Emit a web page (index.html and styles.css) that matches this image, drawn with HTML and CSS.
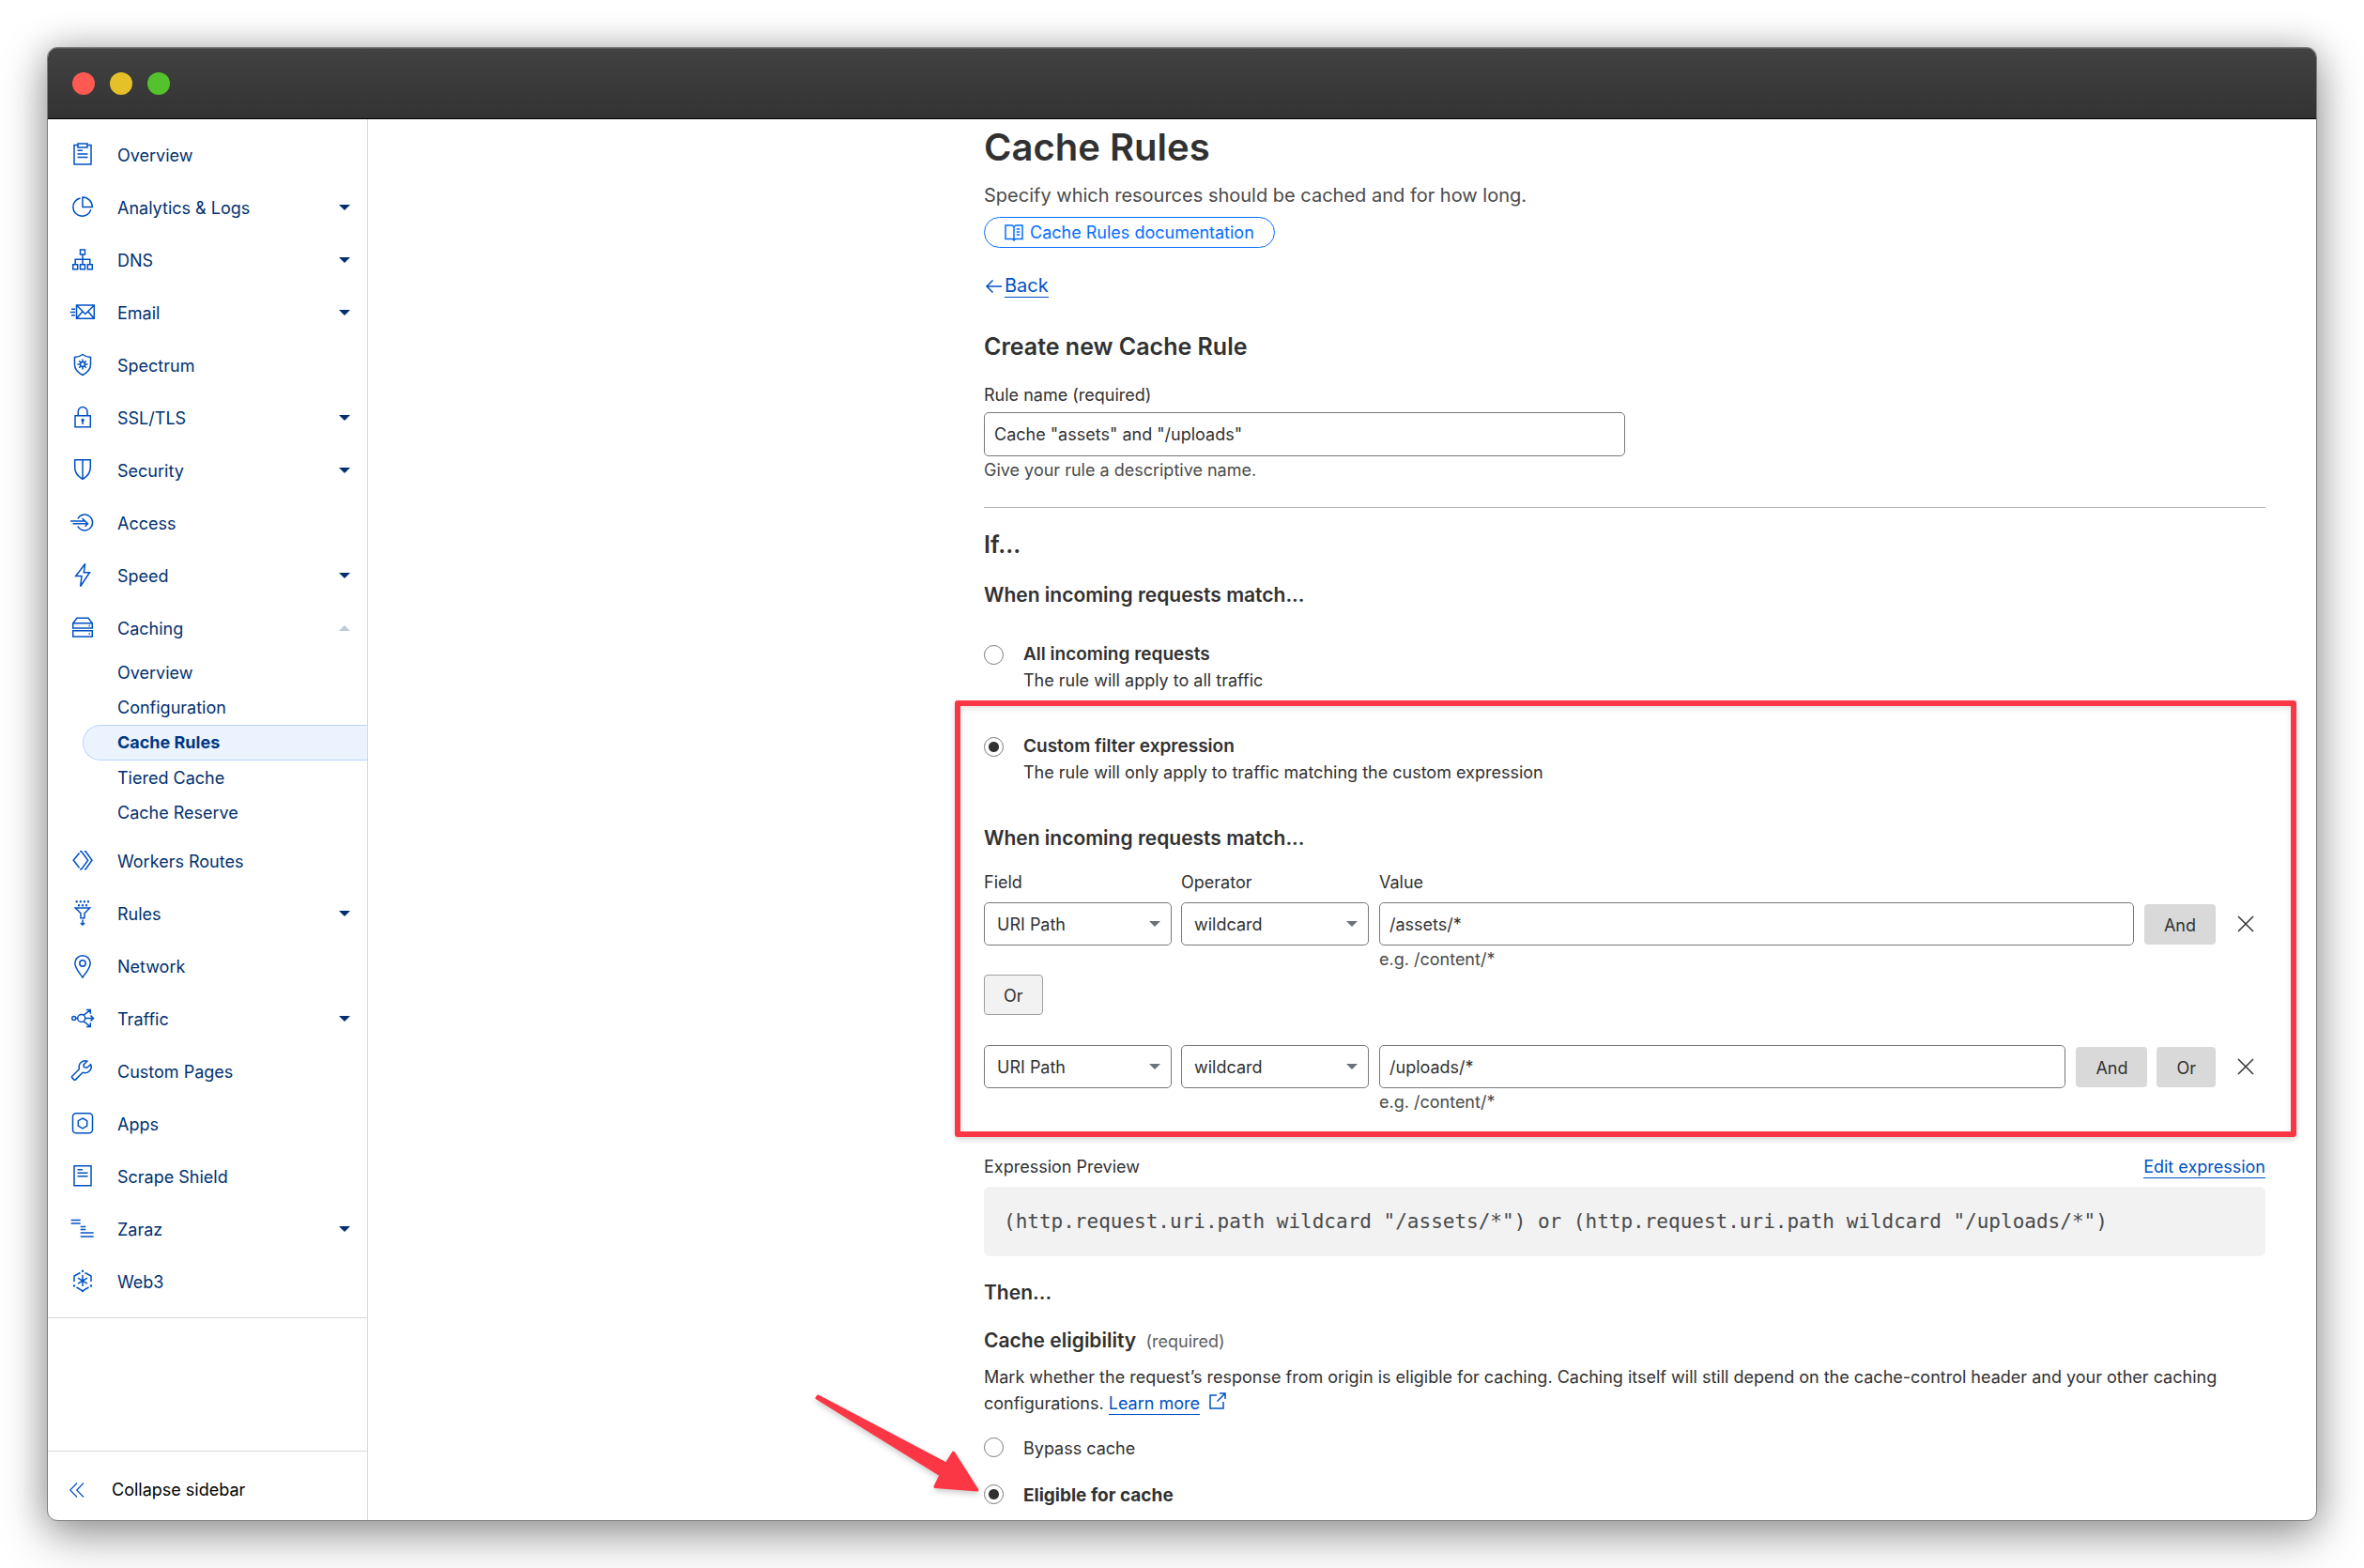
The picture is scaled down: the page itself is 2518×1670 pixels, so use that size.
FILE: index.html
```html
<!DOCTYPE html>
<html lang="en">
<head>
<meta charset="utf-8">
<meta name="viewport" content="width=device-width, initial-scale=1">
<title>Cache Rules</title>
<link rel="stylesheet" href="styles.css">
</head>
<body>
<div class="window">
  <header class="titlebar">
    <span class="light light-close"></span>
    <span class="light light-min"></span>
    <span class="light light-max"></span>
  </header>
  <div class="layout">
    <aside class="sidebar">
      <nav class="nav" aria-label="Zone">
        <a class="nav-item" href="#"><svg class="icon" viewBox="0 0 28 28"><path d="M9 3.500H5v20.500h18V3.500h-4M9 2h10v4H9zM8.500 9.300H14M8.500 13h11M8.500 16.500h11"/></svg>Overview</a>
        <a class="nav-item" href="#"><svg class="icon" viewBox="0 0 28 28"><path d="M11.500 4A9.700 9.700 0 1 0 22.800 16.300M14 3v10.500h10.300A10.400 10.400 0 0 0 14 3z"/></svg>Analytics &amp; Logs<span class="caret"></span></a>
        <a class="nav-item" href="#"><svg class="icon" viewBox="0 0 28 28"><path d="M11.500 3h5v5h-5zM3.700 18.700h5v5h-5zM11.500 18.700h5v5h-5zM19.300 18.700h5v5h-5zM14 8v10.700M6.200 18.700v-5.400h15.600v5.400"/></svg>DNS<span class="caret"></span></a>
        <a class="nav-item" href="#"><svg class="icon" viewBox="0 0 28 28"><path d="M7.500 6h18.800v14.300H7.500zM7.500 6l9.400 9.500L26.300 6M7.500 20.300l6.500-7.500M26.300 20.300l-6.500-7.500M2 10.300h4M.700 13.500H6M2 16.700h4"/></svg>Email<span class="caret"></span></a>
        <a class="nav-item" href="#"><svg class="icon" viewBox="0 0 28 28"><path d="M14 2.500c2.500 2 5.500 2.800 8.500 3v8c0 5-4 8.500-8.500 11-4.500-2.500-8.500-6-8.500-11v-8c3-.200 6-1 8.500-3z"/><circle cx="14" cy="13" r="2.500"/><path d="M14 7.500v3M14 15.500v3M8.500 13h3M16.500 13h3M10.200 9.200l2 2M15.800 14.800l2 2M17.800 9.200l-2 2M12.200 14.800l-2 2"/></svg>Spectrum</a>
        <a class="nav-item" href="#"><svg class="icon" viewBox="0 0 28 28"><path d="M6 11.700h16.300v12H6zM9.200 11.700V7.500a4.900 4.900 0 0 1 9.800 0v4.200M14.100 17v4"/><circle cx="14.100" cy="16.500" r="1"/></svg>SSL/TLS<span class="caret"></span></a>
        <a class="nav-item" href="#"><svg class="icon" viewBox="0 0 28 28"><path d="M5.700 2.700h16.600v8c0 6-3.800 10-8.300 12.600-4.500-2.600-8.300-6.600-8.300-12.600zM14 2.700v20.600"/></svg>Security<span class="caret"></span></a>
        <a class="nav-item" href="#"><svg class="icon" viewBox="0 0 28 28"><path d="M8.800 9.500a8.400 8.400 0 1 1 0 8M1 12h15.500l-3-3M3.500 14.800h15.800M16.500 17.800l3-3-3-3"/></svg>Access</a>
        <a class="nav-item" href="#"><svg class="icon" viewBox="0 0 28 28"><path d="M16.700 1.500L6.700 14.500H13l-1.300 11 9.800-14.800h-6.200z"/></svg>Speed<span class="caret"></span></a>
        <a class="nav-item" href="#" aria-expanded="true"><svg class="icon" viewBox="0 0 28 28"><path d="M8 3.300h12l4.300 5.400V14H3.700V8.700zM3.700 8.700h20.600M3.700 16.700h20.600V23H3.700zM20.500 11.500h1.500M20.500 20h1.500"/></svg>Caching<span class="caret caret-up"></span></a>
        <div class="subnav">
          <a class="sub-item" href="#">Overview</a>
          <a class="sub-item" href="#">Configuration</a>
          <a class="sub-item sub-active" href="#" aria-current="page">Cache Rules</a>
          <a class="sub-item" href="#">Tiered Cache</a>
          <a class="sub-item" href="#">Cache Reserve</a>
        </div>
        <a class="nav-item" href="#"><svg class="icon" viewBox="0 0 28 28"><path d="M10.500 5.500L4.200 13.300l6.300 7.900M11 3.700h1.700l7 9.600-7 9.500H11M16 3.700h1.200l6.800 9.600-6.800 9.500H16"/></svg>Workers Routes</a>
        <a class="nav-item" href="#"><svg class="icon" viewBox="0 0 28 28"><path d="M6.300 8h15.400L16 13.800v5h-4v-5zM14 20.500V26M11.800 24l2.200 2 2.200-2"/><path class="dots" d="M7.700 1.300h0M11.800 1.300h0M15.900 1.300h0M20 1.300h0M10 5.300h0M14 5.300h0M18 5.300h0"/></svg>Rules<span class="caret"></span></a>
        <a class="nav-item" href="#"><svg class="icon" viewBox="0 0 28 28"><path d="M14 2.700a8.200 8.200 0 0 0-8.200 8.200c0 5 5.200 10.800 8.200 15.100 3-4.300 8.200-10.100 8.200-15.100A8.200 8.200 0 0 0 14 2.700z"/><circle cx="14" cy="11" r="3.200"/></svg>Network</a>
        <a class="nav-item" href="#"><svg class="icon" viewBox="0 0 28 28"><circle cx="4.700" cy="13.500" r="2"/><circle cx="12.700" cy="13.500" r="4"/><path d="M6.700 13.500h2M16.700 13.500h8.800M22.500 10.500l3 3-3 3M15 10.300l7.300-5.800M18 4.500h4.300v4.300M15 16.700l7.300 5.800M18 22.500h4.300v-4.300"/></svg>Traffic<span class="caret"></span></a>
        <a class="nav-item" href="#"><svg class="icon" viewBox="0 0 28 28"><path d="M18.800 3.200a6.400 6.400 0 0 0-8.400 7.600c.1.400 0 .9-.3 1.200L2.800 19.200a1.200 1.200 0 0 0 0 1.700l2 2a1.200 1.200 0 0 0 1.700 0l7-7.200c.4-.3.900-.4 1.300-.3a6.400 6.400 0 0 0 7.800-8.700l-4.100 3.600-3-.600-.500-2.800z"/></svg>Custom Pages</a>
        <a class="nav-item" href="#"><svg class="icon" viewBox="0 0 28 28"><rect x="3.500" y="2.800" width="21" height="21" rx="3.500"/><path d="M14 8l4.700 2.700v5.400L14 18.800l-4.700-2.700v-5.400z"/></svg>Apps</a>
        <a class="nav-item" href="#"><svg class="icon" viewBox="0 0 28 28"><path d="M5 2.800h18v21H5zM8.500 6.800H14M8.500 10.300h11M8.500 13.800h11"/></svg>Scrape Shield</a>
        <a class="nav-item" href="#"><svg class="icon" viewBox="0 0 28 28"><path d="M1.700 4.500h10M1.700 8h10M11.700 11.500h5.600M11.700 14.500h5.600M11.700 18h14M11.700 22h14"/></svg>Zaraz<span class="caret"></span></a>
        <a class="nav-item" href="#"><svg class="icon" viewBox="0 0 28 28"><path d="M11.500 4.500L5 8v6M16.500 4.500L23 8v6M7.500 20l6.500 3.800 6.500-3.800M14 7v12M9 10.200l10 6M19 10.200l-10 6"/><path class="dots" d="M14 2.800h0M5 18.500h0M23 18.500h0M14 24h0"/></svg>Web3</a>
      </nav>
      <button class="collapse" type="button"><svg class="collapse-icon" viewBox="0 0 16 16"><path d="M8 .500L.800 8 8 15.500M15 .500L7.800 8l7.200 7.500"/></svg>Collapse sidebar</button>
    </aside>
    <main class="main">
      <div class="content">
        <h1 class="title">Cache Rules</h1>
        <p class="lead">Specify which resources should be cached and for how long.</p>
        <a class="doc-link" href="#"><svg class="doc-icon" viewBox="0 0 20 18"><path d="M1 1h7l2 1.500L12 1h7v14.500h-7.500L10 17l-1.500-1.500H1zM10 2.500V17M12.700 5h3.600M12.700 8h3.600M12.700 11h3.600"/></svg>Cache Rules documentation</a>
        <div class="back"><svg class="back-icon" viewBox="0 0 22 18"><path d="M19 10H3M9.500 3.500L3 10l6.500 6.500"/></svg><a class="link" href="#">Back</a></div>
        <h2 class="heading">Create new Cache Rule</h2>
        <label class="label name-label" for="rule-name">Rule name (required)</label>
        <input class="input name-input" id="rule-name" type="text" value="Cache &quot;assets&quot; and &quot;/uploads&quot;">
        <p class="hint">Give your rule a descriptive name.</p>
        <hr class="rule">
        <h2 class="heading if-heading">If...</h2>
        <h3 class="subheading match-heading">When incoming requests match...</h3>
        <div class="choice choice-all">
          <input class="radio" type="radio" name="match" id="match-all">
          <label for="match-all"><span class="choice-title">All incoming requests</span><span class="choice-note">The rule will apply to all traffic</span></label>
        </div>
        <section class="custom">
          <div class="choice">
            <input class="radio" type="radio" name="match" id="match-custom" checked>
            <label for="match-custom"><span class="choice-title">Custom filter expression</span><span class="choice-note">The rule will only apply to traffic matching the custom expression</span></label>
          </div>
          <h3 class="subheading custom-heading">When incoming requests match...</h3>
          <div class="row row-labels">
            <label class="label col" for="field-1">Field</label>
            <label class="label col" for="operator-1">Operator</label>
            <label class="label col-value" for="value-1">Value</label>
          </div>
          <div class="row">
            <div class="select col"><select id="field-1"><option>URI Path</option></select></div>
            <div class="select col"><select id="operator-1"><option>wildcard</option></select></div>
            <div class="col-value"><input class="input" id="value-1" type="text" value="/assets/*"><p class="hint">e.g. /content/*</p></div>
            <button class="btn" type="button">And</button>
            <button class="remove" type="button" aria-label="Remove"><svg viewBox="0 0 18 18"><path d="M1 1l16 16M17 1L1 17"/></svg></button>
          </div>
          <button class="btn btn-outline" type="button">Or</button>
          <div class="row row-second">
            <div class="select col"><select aria-label="Field"><option>URI Path</option></select></div>
            <div class="select col"><select aria-label="Operator"><option>wildcard</option></select></div>
            <div class="col-value"><input class="input" type="text" aria-label="Value" value="/uploads/*"><p class="hint">e.g. /content/*</p></div>
            <button class="btn" type="button">And</button>
            <button class="btn" type="button">Or</button>
            <button class="remove" type="button" aria-label="Remove"><svg viewBox="0 0 18 18"><path d="M1 1l16 16M17 1L1 17"/></svg></button>
          </div>
        </section>
        <div class="preview-head"><span>Expression Preview</span><a class="link" href="#">Edit expression</a></div>
        <pre class="code"><code>(http.request.uri.path wildcard "/assets/*") or (http.request.uri.path wildcard "/uploads/*")</code></pre>
        <h2 class="subheading then-heading">Then...</h2>
        <h3 class="subheading elig-heading">Cache eligibility <span class="required">(required)</span></h3>
        <p class="para">Mark whether the request’s response from origin is eligible for caching. Caching itself will still depend on the cache-control header and your other caching configurations. <a class="link" href="#">Learn more</a><svg class="ext-icon" viewBox="0 0 18 18"><path d="M8 3H1v14h14v-7M11 1h6v6M17 1L8.500 9.500"/></svg></p>
        <div class="choice choice-bypass">
          <input class="radio" type="radio" name="cache" id="bypass">
          <label for="bypass">Bypass cache</label>
        </div>
        <div class="choice choice-eligible">
          <input class="radio" type="radio" name="cache" id="eligible" checked>
          <label class="strong" for="eligible">Eligible for cache</label>
          <svg class="arrow" viewBox="0 0 180 112"><path d="M9.500 6L146 78 153.500 66 179 106 134 102.500 140 90 8 8z"/></svg>
        </div>
      </div>
    </main>
  </div>
</div>
</body>
</html>
```

FILE: styles.css
```css
* { box-sizing: border-box; }

body {
  margin: 0;
  padding: 50px;
  min-height: 100vh;
  display: flex;
  background: #fff;
  color: #313131;
  font: 400 18px/28px Inter, "Liberation Sans", sans-serif;
}

h1, h2, h3, p, pre { margin: 0; }

button, input, select { font: inherit; color: inherit; }

a { text-decoration: none; }

svg { fill: none; stroke: currentColor; flex: none; }

/* Window frame */
.window {
  flex: 1;
  min-width: 0;
  display: flex;
  flex-direction: column;
  overflow: hidden;
  border: 1px solid #7d7d7d;
  border-radius: 11px;
  background: #fff;
  box-shadow: 0 16px 50px rgba(0, 0, 0, 0.36), 0 0 36px rgba(0, 0, 0, 0.2);
}

.titlebar {
  display: flex;
  align-items: center;
  gap: 16px;
  height: 76px;
  padding: 0 26px;
  border-bottom: 1px solid #000;
  background: linear-gradient(#424242, #333);
  box-shadow: inset 0 1px #5c5c5c;
}

.light { width: 24px; height: 24px; border-radius: 50%; }
.light-close { background: #ff5a52; }
.light-min { background: #e6c029; }
.light-max { background: #53c22c; }

.layout { flex: 1; display: flex; }

/* Sidebar */
.sidebar {
  width: 341px;
  flex: none;
  display: flex;
  flex-direction: column;
  border-right: 1px solid #d9d9d9;
}

.nav { padding: 11px 0 9px; border-bottom: 1px solid #d9d9d9; }

.nav-item {
  display: flex;
  align-items: center;
  height: 56px;
  padding: 0 18px 0 23px;
  color: #003070;
}

.icon {
  width: 28px;
  height: 28px;
  margin: 0 23px 2px 0;
  color: #0051c3;
  stroke-width: 1.5;
  overflow: visible;
}

.dots { stroke-width: 2.4; stroke-linecap: round; }

.caret {
  margin: 0 0 2px auto;
  border: 6px solid transparent;
  border-top-color: #003070;
  border-bottom: 0;
}

.caret-up {
  border-top: 0;
  border-bottom: 6px solid #bfcadb;
}

.subnav { padding: 0 0 6px 37px; }

.sub-item {
  display: block;
  padding-left: 37px;
  line-height: 37px;
  color: #003070;
}

.sub-active {
  border: 1px solid #b9d6ff;
  border-right: 0;
  border-radius: 19px 0 0 19px;
  padding-left: 36px;
  line-height: 36px;
  background: #ebf3ff;
  color: #003681;
  font-weight: 700;
}

.collapse {
  display: flex;
  align-items: center;
  gap: 29px;
  height: 74px;
  margin-top: auto;
  padding: 8px 23px 0;
  border: 0;
  border-top: 1px solid #d9d9d9;
  background: none;
  color: #000;
}

.collapse-icon { width: 16px; height: 16px; color: #0051c3; stroke-width: 1.2; }

/* Main column */
.main { flex: 1; min-width: 0; display: flex; padding: 6px 54px 10px; }

.content { width: 100%; max-width: 1365px; margin-left: auto; }

.title { font-size: 40px; line-height: 48px; font-weight: 600; }

.lead { margin-top: 11px; font-size: 20px; line-height: 32px; color: #4a4a4a; }

.doc-link {
  display: flex;
  align-items: center;
  gap: 7px;
  width: fit-content;
  height: 33px;
  margin-top: 7px;
  padding: 1px 21px 0;
  border: 1px solid #056dff;
  border-radius: 17px;
  color: #056dff;
}

.doc-icon { width: 20px; height: 18px; stroke-width: 1.5; }

.back {
  display: flex;
  align-items: center;
  height: 32px;
  margin-top: 24px;
  font-size: 20px;
  color: #0051c3;
}

.back-icon { width: 22px; height: 18px; stroke-width: 1.5; }

.link {
  display: inline-block;
  border-bottom: 1px solid #0051c3;
  color: #0051c3;
  line-height: 22px;
}

.back .link { line-height: 24px; }

.heading { margin-top: 33px; font-size: 25px; line-height: 32px; font-weight: 600; }

.subheading { font-size: 21px; line-height: 28px; font-weight: 600; }

.label { display: block; }

.name-label { margin-top: 22px; }

.input {
  display: block;
  width: 100%;
  height: 46px;
  padding: 0 10px;
  border: 1px solid #797979;
  border-radius: 5px;
  background: #fff;
}

.name-input { width: 50%; height: 47px; margin-top: 4px; }

.hint { margin-top: 1px; color: #4a4a4a; }

.rule { margin: 25px 0 0; border: 0; border-top: 1px solid #b6b6b6; }

.if-heading { margin-top: 23px; }

.match-heading { margin-top: 24px; }

.choice { position: relative; display: flex; gap: 21px; }

.choice-all { margin-top: 35px; }

.choice-title { display: block; font-size: 19px; font-weight: 600; }

.choice-note { display: block; }

.radio {
  appearance: none;
  flex: none;
  width: 21px;
  height: 21px;
  margin: 4px 0 0;
  border: 1px solid #797979;
  border-radius: 50%;
  background: #fff;
}

.radio:checked { background: radial-gradient(circle, #313131 5px, #fff 6px); }

.custom { position: relative; margin-top: 42px; }

/* Red callout frame over the filter section */
.custom::after {
  content: "";
  position: absolute;
  inset: -35px -33px -23px -31px;
  border: 6px solid #fb3645;
  border-radius: 3px;
  box-shadow: 0 3px 6px rgba(0, 0, 0, 0.15), inset 0 3px 6px rgba(0, 0, 0, 0.1);
  pointer-events: none;
}

.custom-heading { margin-top: 42px; }

.row { display: flex; align-items: flex-start; gap: 10px; }

.row-labels { margin: 19px 0 7px; }

.row-second { margin-top: 32px; }

.col { width: 200px; flex: none; }

.col-value { flex: 1; min-width: 0; margin: 0 1px; }

.select { position: relative; }

.select select {
  appearance: none;
  display: block;
  width: 100%;
  height: 46px;
  padding: 1px 13px 0;
  border: 1px solid #797979;
  border-radius: 5px;
  background: #fff;
}

.select::after {
  content: "";
  position: absolute;
  top: 20px;
  right: 12px;
  border: 6px solid transparent;
  border-top-color: #6b7178;
  border-bottom: 0;
  pointer-events: none;
}

.btn {
  height: 43px;
  margin-top: 2px;
  padding: 2px 21px 0;
  border: 0;
  border-radius: 4px;
  background: #d9d9d9;
}

.btn-outline {
  display: block;
  border: 1px solid #a0a0a0;
  padding: 2px 20px 0;
  background: #f2f2f2;
}

.remove {
  display: flex;
  align-items: center;
  justify-content: center;
  width: 43px;
  height: 46px;
  padding: 0;
  border: 0;
  background: none;
}

.remove svg { width: 18px; height: 18px; stroke-width: 1.5; }

.preview-head {
  display: flex;
  justify-content: space-between;
  align-items: center;
  margin-top: 41px;
}

.code {
  margin-top: 7px;
  padding: 21px;
  border-radius: 6px;
  background: #f2f2f2;
  color: #4a4a4a;
  font-size: 21px;
  line-height: 32px;
  overflow: hidden;
}

.code code { font: inherit; font-family: "DejaVu Sans Mono", "Liberation Mono", monospace; }

.then-heading { margin-top: 25px; }

.elig-heading { margin-top: 23px; }

.required { margin-left: 5px; font-size: 18px; font-weight: 400; color: #5e5e5e; }

.para { margin-top: 10px; }

.ext-icon { width: 18px; height: 18px; margin-left: 10px; color: #0051c3; stroke-width: 1.5; }

.choice-bypass { margin-top: 20px; }

.choice-eligible { margin-top: 22px; }

.choice-bypass .radio, .choice-eligible .radio { margin-top: 2px; }

.strong { font-size: 19px; font-weight: 700; }

/* Callout arrow pointing at the selected radio */
.arrow {
  position: absolute;
  left: -186px;
  top: -98px;
  width: 180px;
  height: 112px;
  fill: #fb3645;
  stroke: #fb3645;
  stroke-width: 3;
  stroke-linejoin: round;
  overflow: visible;
  filter: drop-shadow(0 3px 3px rgba(0, 0, 0, 0.2));
}
```
